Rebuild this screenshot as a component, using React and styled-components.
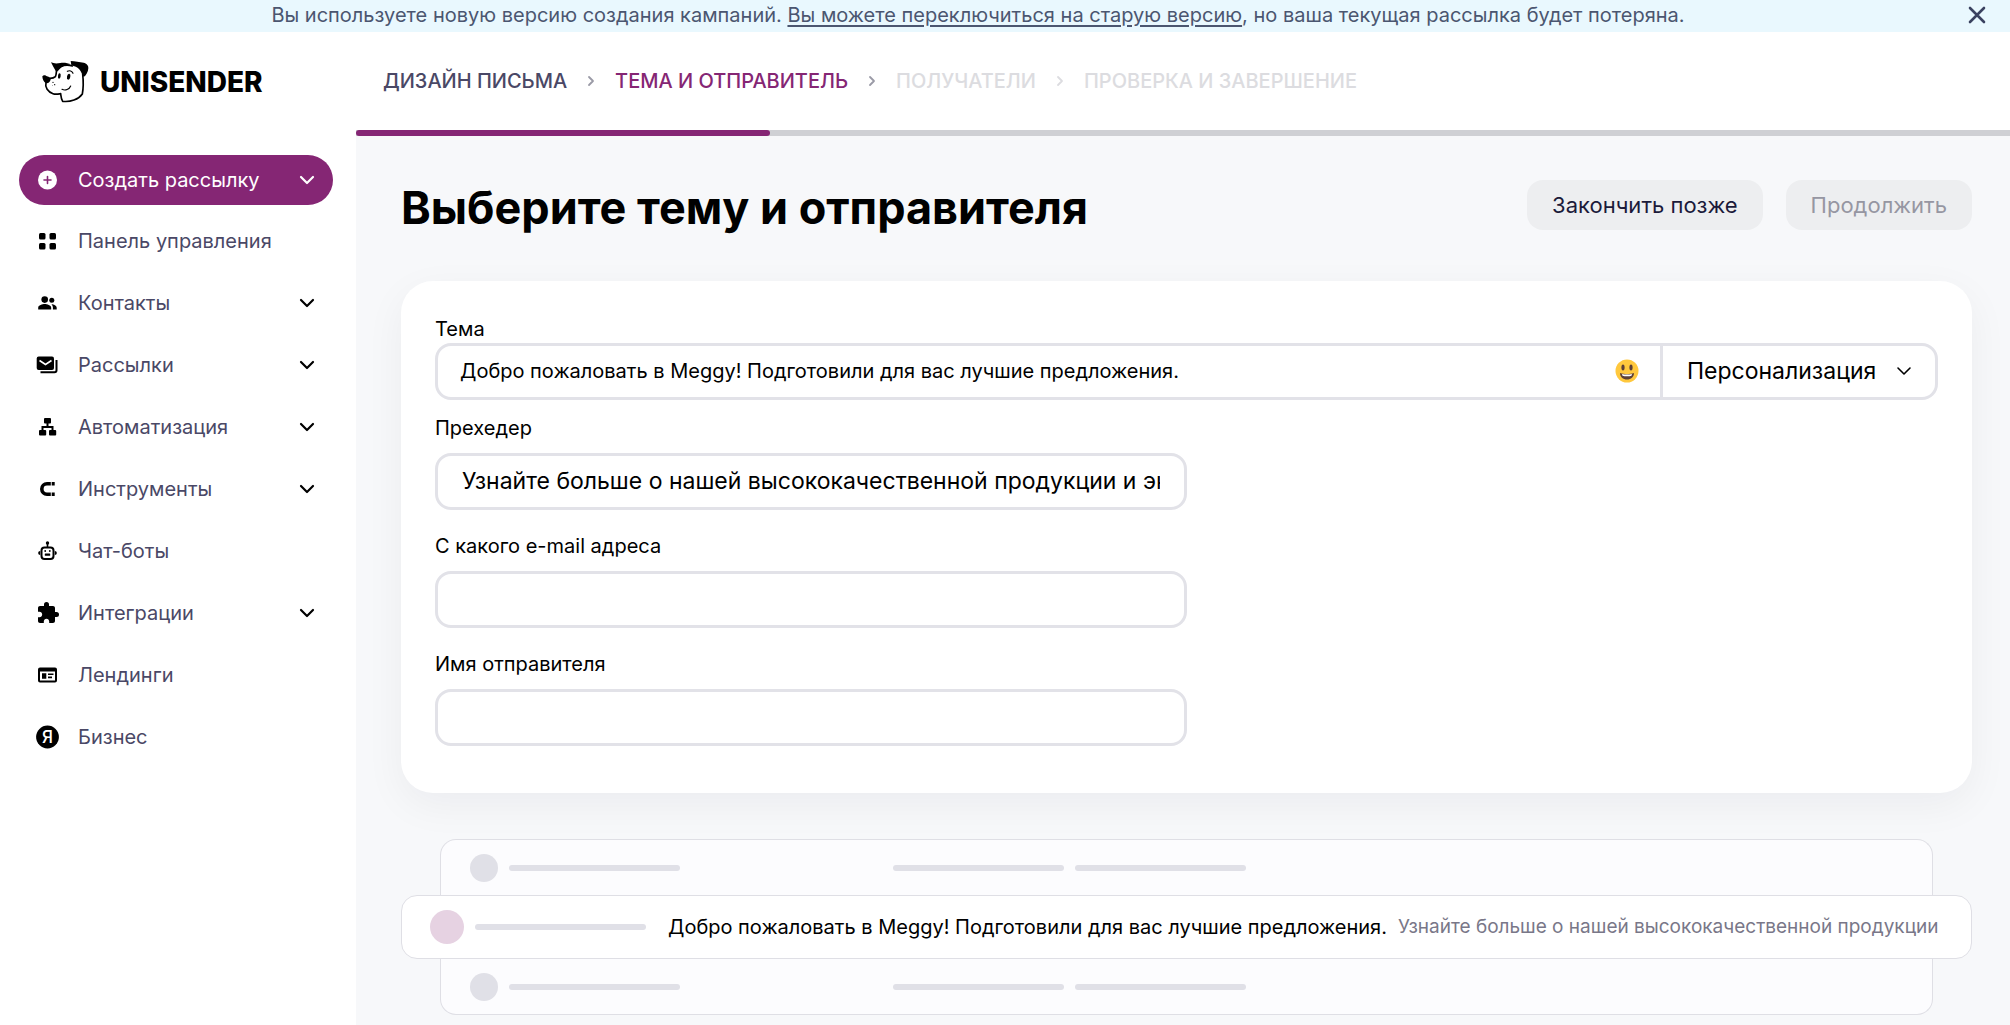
import React, { useState } from 'react'
import styled, { createGlobalStyle } from 'styled-components'
import { MdExtension } from 'react-icons/md'

const GlobalStyle = createGlobalStyle`
  * {
    box-sizing: border-box;
  }
  body {
    margin: 0;
    font-family: Inter, 'Liberation Sans', sans-serif;
    font-size: 20px;
    line-height: 24px;
    color: #000;
    background-color: #f7f8fa;
  }
  button, input, select {
    font-family: inherit;
    color: inherit;
    margin: 0;
  }
`

const Page = styled.div`
  display: flex;
  flex-direction: column;
  min-height: 100vh;
`
const Banner = styled.div`
  display: flex;
  align-items: center;
  gap: 12px;
  height: 32px;
  padding: 0 24px 0 0;
  background-color: #e9f8fe;
  color: #4b5670;
`
const BannerText = styled.p`
  flex: 1;
  margin: 0;
  padding-bottom: 2px;
  text-align: center;

  a {
    color: inherit;
    text-underline-offset: 3px;
  }
`
const CloseButton = styled.button`
  display: flex;
  padding: 0 0 2px;
  border: none;
  background: none;
  color: #3a4260;
  cursor: pointer;
`
const Body = styled.div`
  display: flex;
  flex: 1;
`
const Sidebar = styled.aside`
  flex: none;
  width: 356px;
  padding: 27px 23px 0 19px;
  background-color: #fff;
`
const Logo = styled.a`
  display: flex;
  align-items: center;
  gap: 11px;
  height: 46px;
  padding-left: 22px;
  color: #000;
  font-size: 28px;
  font-weight: 800;
  text-decoration: none;
`
const Menu = styled.nav`
  display: flex;
  flex-direction: column;
  gap: 12px;
  margin-top: 11px;
`
const CreateButton = styled.button`
  display: flex;
  align-items: center;
  gap: 18px;
  height: 50px;
  margin-top: 50px;
  width: 100%;
  padding: 0 18px 0 17px;
  border: none;
  border-radius: 25px;
  background-color: #852674;
  color: #fff;
  font-size: 20px;
  text-align: left;
  cursor: pointer;
`
const MenuItem = styled.a`
  display: flex;
  align-items: center;
  gap: 18px;
  height: 50px;
  padding: 0 18px 0 17px;
  color: #4a4866;
  text-decoration: none;

  svg {
    color: #000;
  }
`
const Grow = styled.span`
  flex: 1;
`
const Main = styled.main`
  flex: 1;
  min-width: 0;
`
const Steps = styled.nav`
  display: flex;
  align-items: center;
  gap: 20px;
  height: 98px;
  padding: 0 27px;
  background-color: #fff;
  font-weight: 500;
`
const Step = styled.a`
  color: ${(props) => props.$color};
  text-decoration: none;
  text-transform: uppercase;
`
const Progress = styled.div`
  height: 6px;
  background-color: #cfd0d4;
`
const ProgressBar = styled.div`
  height: 6px;
  border-radius: 3px;
  background-color: #852674;
`
const Content = styled.div`
  padding: 44px 38px 10px 45px;
`
const TitleRow = styled.div`
  display: flex;
  justify-content: space-between;
  align-items: flex-start;
  margin-bottom: 45px;
`
const Title = styled.h1`
  margin: 0;
  font-size: 45px;
  line-height: 56px;
  font-weight: 700;
`
const Actions = styled.div`
  display: flex;
  gap: 23px;
`
const ActionButton = styled.button`
  height: 50px;
  padding: 0 25px;
  border: none;
  border-radius: 16px;
  background-color: #edeef0;
  color: #1b1a3a;
  font-size: 22px;
  cursor: pointer;

  &:disabled {
    color: #9696a2;
    cursor: default;
  }
`
const Card = styled.form`
  padding: 36px 34px 47px;
  border-radius: 32px;
  background-color: #fff;
  box-shadow: 0 12px 40px rgba(20, 20, 40, 0.05);
`
const Field = styled.div`
  display: flex;
  flex-direction: column;
  gap: ${(props) => (props.$tight ? 2 : 13)}px;
  margin-bottom: ${(props) => (props.$tight ? 16 : 24)}px;
  width: ${(props) => (props.$wide ? '100%' : '50%')};

  &:last-child {
    margin-bottom: 0;
  }
`
const Input = styled.input`
  width: 100%;
  height: 57px;
  padding: 0 24px 2px;
  border: 3px solid #e2e2e8;
  border-radius: 16px;
  background-color: #fff;
  font-size: 23px;
`
const ThemeGroup = styled.div`
  display: flex;
  align-items: center;
  height: 57px;
  border: 3px solid #e2e2e8;
  border-radius: 16px;
`
const ThemeInput = styled.input`
  flex: 1;
  min-width: 0;
  padding: 0 22px 2px;
  border: none;
  background: none;
  font-size: 20px;
`
const EmojiButton = styled.button`
  display: flex;
  padding: 0 0 2px;
  margin-right: 21px;
  border: none;
  background: none;
  cursor: pointer;
`
const SelectWrap = styled.div`
  position: relative;
  display: flex;
  height: 51px;
  width: 275px;
  border-left: 3px solid #e2e2e8;

  svg {
    position: absolute;
    right: 23px;
    top: 17px;
    pointer-events: none;
  }
`
const Select = styled.select`
  width: 100%;
  padding: 0 24px 2px;
  border: none;
  background: none;
  font-size: 23px;
  appearance: none;
`
const Preview = styled.section`
  margin-top: 46px;
`
const GhostMail = styled.div`
  display: flex;
  align-items: center;
  height: 56px;
  margin: 0 39px;
  padding: 0 29px;
  border: 1px solid #dfdfe5;
  border-width: ${(props) => (props.$last ? '0 1px 1px' : '1px 1px 0')};
  border-radius: ${(props) => (props.$last ? '0 0 16px 16px' : '16px 16px 0 0')};
  background-color: #fcfcfe;
`
const Mail = styled.div`
  display: flex;
  align-items: center;
  height: 64px;
  padding: 0 24px 0 28px;
  border: 1px solid #dfdfe5;
  border-radius: 16px;
  background-color: #fff;
  white-space: nowrap;
`
const Avatar = styled.div`
  flex: none;
  width: ${(props) => (props.$active ? 34 : 28)}px;
  height: ${(props) => (props.$active ? 34 : 28)}px;
  margin-right: 11px;
  border-radius: 50%;
  background-color: ${(props) => (props.$active ? '#e6d2e2' : '#e0e0e7')};
`
const Line = styled.div`
  flex: none;
  width: 171px;
  height: 6px;
  margin-right: ${(props) => props.$gap || 0}px;
  border-radius: 3px;
  background-color: #e0e0e7;
`
const Preheader = styled.span`
  flex: 1;
  margin-left: 11px;
  overflow: hidden;
  color: #797788;
  font-size: 19px;
`

function Icon({ size = 24, children }) {
  return (
    <svg width={size} height={size} viewBox="0 0 24 24" fill="currentColor" aria-hidden="true">
      {children}
    </svg>
  )
}

function Chevron({ width = 2.2 }) {
  return (
    <svg width="16" height="16" viewBox="0 0 16 16" fill="none" stroke="currentColor" strokeWidth={width} aria-hidden="true">
      <path d="M2 5l6 6 6-6" strokeLinecap="round" strokeLinejoin="round" />
    </svg>
  )
}

function StepArrow({ color }) {
  return (
    <svg width="8" height="12" viewBox="0 0 8 12" fill="none" stroke={color} strokeWidth="1.8" aria-hidden="true">
      <path d="M2 2l4 4-4 4" strokeLinecap="round" strokeLinejoin="round" />
    </svg>
  )
}

function Dog() {
  return (
    <svg width="48" height="44" viewBox="122 180 144 132" aria-hidden="true">
      <path
        d="M170 204C167 214 169 224 165 230C160 235 154 235 149 235M137 248C133 262 143 276 158 281C166 284 174 282 181 281C182 290 182 296 187 304C210 307 235 298 246 282C250 260 249 240 247 222M180 200C196 193 206 195 216 198"
        fill="none"
        stroke="#000"
        strokeWidth="5"
        strokeLinecap="round"
        strokeLinejoin="round"
      />
      <path d="M126 229C130 223 136 226 140 229C146 232 152 232 151 238C150 245 145 251 137 250C130 246 126 236 126 229Z" />
      <path d="M152 187C160 191 170 191 180 189C190 187 202 189 212 193C196 195 184 200 176 209C172 214 169 217 166 212C160 204 157 196 152 187Z" />
      <path d="M211 183C224 184 238 186 250 188C258 190 265 196 264 205C263 216 258 226 250 231C246 224 243 216 238 209C232 202 222 198 213 196Z" />
      <ellipse cx="177" cy="228" rx="4" ry="8" transform="rotate(8 177 228)" />
      <ellipse cx="205" cy="230" rx="5" ry="9" transform="rotate(12 205 230)" />
      <path d="M201 214c7-4 14-1 17 6M185 268c10 5 22 0 26-10" fill="none" stroke="#000" strokeWidth="3.5" strokeLinecap="round" />
      <circle cx="158" cy="247" r="2" />
      <circle cx="163" cy="254" r="2" />
      <circle cx="156" cy="256" r="1" />
    </svg>
  )
}

const icons = {
  dashboard: (
    <Icon>
      <rect x="3" y="4" width="6.5" height="6.5" rx="1.5" />
      <rect x="13.5" y="4" width="6.5" height="6.5" rx="1.5" />
      <rect x="3" y="14" width="6.5" height="6.5" rx="1.5" />
      <rect x="13.5" y="14" width="6.5" height="6.5" rx="1.5" />
    </Icon>
  ),
  contacts: (
    <Icon>
      <circle cx="8.7" cy="8.6" r="3.3" />
      <circle cx="15.8" cy="9.2" r="2.5" />
      <path d="M2.2 18.5v-1.8c0-2.4 4.3-3.7 6.5-3.7s6.5 1.3 6.5 3.7v1.8zM15.5 13.2c2.2.2 5.2 1.3 5.2 3.6v1.7h-3.8v-1.9c0-1.4-.6-2.6-1.4-3.4z" />
    </Icon>
  ),
  mail: (
    <Icon>
      <rect x="0.7" y="3.5" width="17.3" height="13.5" rx="2" />
      <path d="M3.5 7.5l6 4 6-4" fill="none" stroke="#fff" strokeWidth="1.6" />
      <path d="M20.5 7v10.2a2 2 0 0 1-2 2H4.5" fill="none" stroke="currentColor" strokeWidth="2" />
    </Icon>
  ),
  automation: (
    <Icon>
      <rect x="8" y="3" width="7" height="5.5" rx="1" />
      <path d="M11.5 8v4M6.5 15.5V12h10v3.5" fill="none" stroke="currentColor" strokeWidth="2" />
      <rect x="3" y="15" width="7.2" height="5.5" rx="1" />
      <rect x="13" y="15" width="7.2" height="5.5" rx="1" />
    </Icon>
  ),
  magnet: (
    <Icon>
      <path d="M14.8 6.8h-3.8a5.2 5.2 0 0 0 0 10.4h3.8" fill="none" stroke="currentColor" strokeWidth="3.6" />
      <path d="M15.7 5h3v3.6h-3zM15.7 15.4h3V19h-3z" />
    </Icon>
  ),
  robot: (
    <Icon>
      <rect x="5.5" y="8.5" width="12" height="11.5" rx="3" fill="none" stroke="currentColor" strokeWidth="2" />
      <circle cx="11.5" cy="4" r="1.7" />
      <path d="M10.7 4h1.6v4h-1.6zM2.2 14c0-1.2.8-2 2-2v4c-1.2 0-2-.8-2-2zM20.8 14c0-1.2-.8-2-2-2v4c1.2 0 2-.8 2-2z" />
      <circle cx="9.2" cy="12" r="0.9" />
      <circle cx="13.8" cy="12" r="0.9" />
      <rect x="8.8" y="14.5" width="5.4" height="2.3" rx="0.5" />
    </Icon>
  ),
  integrations: <MdExtension size={24} />,
  landing: (
    <Icon>
      <path
        d="M4 4.5h15a2 2 0 0 1 2 2v11a2 2 0 0 1-2 2H4a2 2 0 0 1-2-2v-11a2 2 0 0 1 2-2zM4 8.5v9h15v-9z"
        fillRule="evenodd"
      />
      <path d="M6 10.3h4.3v5.4H6zM12 10.5h5.5v1.6H12zM12 13.6h4v1.6h-4z" />
    </Icon>
  ),
  business: (
    <Icon>
      <circle cx="11.5" cy="12" r="11.4" />
      <text x="11.5" y="18" fill="#fff" fontSize="17" fontWeight="500" textAnchor="middle">
        Я
      </text>
    </Icon>
  ),
}

const menu = [
  { icon: 'dashboard', label: 'Панель управления' },
  { icon: 'contacts', label: 'Контакты', nested: true },
  { icon: 'mail', label: 'Рассылки', nested: true },
  { icon: 'automation', label: 'Автоматизация', nested: true },
  { icon: 'magnet', label: 'Инструменты', nested: true },
  { icon: 'robot', label: 'Чат-боты' },
  { icon: 'integrations', label: 'Интеграции', nested: true },
  { icon: 'landing', label: 'Лендинги' },
  { icon: 'business', label: 'Бизнес' },
]

export default function App() {
  const [theme, setTheme] = useState('Добро пожаловать в Meggy! Подготовили для вас лучшие предложения.')
  const [preheader, setPreheader] = useState('Узнайте больше о нашей высококачественной продукции и экономьте с нами')
  const [email, setEmail] = useState('')
  const [sender, setSender] = useState('')

  return (
    <Page>
      <GlobalStyle />
      <Banner>
        <BannerText>
          Вы используете новую версию создания кампаний. <a href="#old">Вы можете переключиться на старую версию</a>, но
          ваша текущая рассылка будет потеряна.
        </BannerText>
        <CloseButton type="button" aria-label="Закрыть">
          <svg width="18" height="18" viewBox="0 0 18 18" fill="none" stroke="currentColor" strokeWidth="2.6">
            <path d="M2 2l14 14M16 2L2 16" strokeLinecap="round" />
          </svg>
        </CloseButton>
      </Banner>
      <Body>
        <Sidebar>
          <Logo href="#">
            <Dog />
            UNISENDER
          </Logo>
          <CreateButton type="button">
            <Icon>
              <circle cx="11.5" cy="12" r="9.5" />
              <path d="M11.5 8.5v7M8 12h7" stroke="#852674" strokeWidth="1.6" strokeLinecap="round" />
            </Icon>
            <Grow>Создать рассылку</Grow>
            <Chevron />
          </CreateButton>
          <Menu>
            {menu.map((item) => (
              <MenuItem key={item.icon} href={`#${item.icon}`}>
                {icons[item.icon]}
                <Grow>{item.label}</Grow>
                {item.nested && <Chevron />}
              </MenuItem>
            ))}
          </Menu>
        </Sidebar>
        <Main>
          <Steps>
            <Step href="#design" $color="#4a4866">Дизайн письма</Step>
            <StepArrow color="#9a9aa6" />
            <Step href="#theme" $color="#852674">Тема и отправитель</Step>
            <StepArrow color="#9a9aa6" />
            <Step href="#recipients" $color="#dcdce0">Получатели</Step>
            <StepArrow color="#dcdce0" />
            <Step href="#finish" $color="#dcdce0">Проверка и завершение</Step>
          </Steps>
          <Progress>
            <ProgressBar style={{ width: `${(1 / 4) * 100}%` }} />
          </Progress>
          <Content>
            <TitleRow>
              <Title>Выберите тему и отправителя</Title>
              <Actions>
                <ActionButton type="button">Закончить позже</ActionButton>
                <ActionButton type="button" disabled>
                  Продолжить
                </ActionButton>
              </Actions>
            </TitleRow>
            <Card>
              <Field $tight $wide>
                <label htmlFor="theme">Тема</label>
                <ThemeGroup>
                  <ThemeInput id="theme" value={theme} onChange={(e) => setTheme(e.target.value)} />
                  <EmojiButton type="button" aria-label="Эмодзи">
                    <svg width="24" height="24" viewBox="0 0 24 24">
                      <circle cx="12" cy="12" r="11.5" fill="#ffc83d" />
                      <ellipse cx="8" cy="8.5" rx="1.6" ry="3" fill="#5d4037" />
                      <ellipse cx="16" cy="8.5" rx="1.6" ry="3" fill="#5d4037" />
                      <path d="M5 14c4 1.5 10 1.5 14 0 0 4-3 6.5-7 6.5S5 18 5 14z" fill="#5d4037" />
                      <path d="M7 15c3 .8 7 .8 10 0l-.5 1.7c-2.5.8-6.5.8-9 0z" fill="#fff" />
                    </svg>
                  </EmojiButton>
                  <SelectWrap>
                    <Select aria-label="Персонализация" defaultValue="">
                      <option value="">Персонализация</option>
                    </Select>
                    <Chevron width={1.6} />
                  </SelectWrap>
                </ThemeGroup>
              </Field>
              <Field>
                <label htmlFor="preheader">Прехедер</label>
                <Input id="preheader" value={preheader} onChange={(e) => setPreheader(e.target.value)} />
              </Field>
              <Field>
                <label htmlFor="email">С какого e-mail адреса</label>
                <Input id="email" type="email" value={email} onChange={(e) => setEmail(e.target.value)} />
              </Field>
              <Field>
                <label htmlFor="sender">Имя отправителя</label>
                <Input id="sender" value={sender} onChange={(e) => setSender(e.target.value)} />
              </Field>
            </Card>
            <Preview>
              <GhostMail>
                <Avatar />
                <Line $gap={213} />
                <Line $gap={11} />
                <Line />
              </GhostMail>
              <Mail>
                <Avatar $active />
                <Line $gap={22} />
                <span>{theme}</span>
                <Preheader>Узнайте больше о нашей высококачественной продукции</Preheader>
              </Mail>
              <GhostMail $last>
                <Avatar />
                <Line $gap={213} />
                <Line $gap={11} />
                <Line />
              </GhostMail>
            </Preview>
          </Content>
        </Main>
      </Body>
    </Page>
  )
}
